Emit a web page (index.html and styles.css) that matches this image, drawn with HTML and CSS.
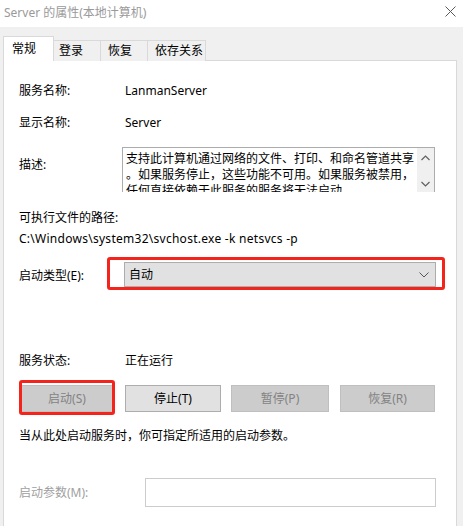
FILE: index.html
```html
<!DOCTYPE html>
<html lang="zh-CN">
<head>
<meta charset="utf-8">
<title>Server 的属性(本地计算机)</title>
<link rel="stylesheet" href="styles.css">
</head>
<body>
<div class="window">
  <div class="titlebar">
    <span class="title">Server 的属性(本地计算机)</span>
    <svg class="close" width="11" height="11" viewBox="0 0 11 11"><path d="M0.5 0.5 L10.5 10.5 M10.5 0.5 L0.5 10.5" stroke="#5a5a5a" stroke-width="1" fill="none"/></svg>
  </div>
  <div class="tabs">
    <div class="tab active t1">常规</div>
    <div class="tab t2">登录</div>
    <div class="tab t3">恢复</div>
    <div class="tab t4">依存关系</div>
  </div>
  <div class="panel">
    <div class="row r-name"><span class="label">服务名称:</span><span class="value">LanmanServer</span></div>
    <div class="row r-disp"><span class="label">显示名称:</span><span class="value">Server</span></div>
    <div class="row r-desc">
      <span class="label desc-label">描述:</span>
      <div class="descbox">
        <div class="desctext">支持此计算机通过网络的文件、打印、和命名管道共享。如果服务停止，这些功能不可用。如果服务被禁用，任何直接依赖于此服务的服务将无法启动。</div>
        <div class="scroll">
          <svg width="9" height="6" viewBox="0 0 9 6"><path d="M0.5 5 L4.5 1 L8.5 5" stroke="#606060" stroke-width="1.2" fill="none"/></svg>
          <svg width="9" height="6" viewBox="0 0 9 6"><path d="M0.5 1 L4.5 5 L8.5 1" stroke="#606060" stroke-width="1.2" fill="none"/></svg>
        </div>
      </div>
    </div>
    <div class="pathlabel">可执行文件的路径:</div>
    <div class="pathvalue">C:\Windows\system32\svchost.exe -k netsvcs -p</div>
    <div class="row r-type">
      <span class="label">启动类型(E):</span>
      <div class="combo">
        <span>自动</span>
        <svg width="10" height="6" viewBox="0 0 10 6"><path d="M0.5 0.5 L5 5 L9.5 0.5" stroke="#555" stroke-width="1" fill="none"/></svg>
        <div class="redframe combo-frame"></div>
      </div>
    </div>
    <div class="row r-status"><span class="label">服务状态:</span><span class="value">正在运行</span></div>
    <div class="buttons">
      <div class="btn disabled first">启动(S)<div class="redframe btn-frame"></div></div>
      <div class="btn">停止(T)</div>
      <div class="btn disabled">暂停(P)</div>
      <div class="btn disabled">恢复(R)</div>
    </div>
    <div class="hint">当从此处启动服务时，你可指定所适用的启动参数。</div>
    <div class="row r-param">
      <span class="label param-label">启动参数(M):</span>
      <div class="param-input"></div>
    </div>
  </div>
</div>
</body>
</html>
```

FILE: styles.css
```css
* { box-sizing: border-box; }
html, body {
  margin: 0;
  padding: 0;
  width: 463px;
  height: 526px;
  overflow: hidden;
  background: #f0f0f0;
  font-family: "Noto Sans", "Noto Sans CJK SC", sans-serif;
  font-size: 12px;
  color: #000;
}
.window { width: 463px; height: 526px; overflow: hidden; }
.titlebar {
  height: 27px;
  background: #fff;
  display: flex;
  align-items: center;
  justify-content: space-between;
  padding: 0 7px 2px 4px;
}
.title { color: #9a9a9a; font-size: 12px; line-height: 16px; }
.close { display: block; margin-top: -2px; }

.tabs {
  display: flex;
  align-items: flex-end;
  padding-left: 3px;
  margin-top: 9px;
  height: 25px;
  position: relative;
  z-index: 2;
}
.tab {
  height: 21px;
  line-height: 20px;
  border: 1px solid #d9d9d9;
  border-bottom: none;
  background: #f0f0f0;
  margin-left: -1px;
}
.tab.active {
  height: 25px;
  line-height: 24px;
  background: #fff;
  margin-left: 0;
  padding-bottom: 1px;
}
.t1 { width: 51px; padding-left: 8px; }
.t2 { width: 47px; padding-left: 5px; border-left: none; margin-left: 0; }
.t3 { width: 48px; padding-left: 7px; }
.t4 { width: 59px; padding-left: 7px; }

.panel {
  margin: -1px 6px 0 3px;
  height: 480px;
  background: #fff;
  border: 1px solid #d9d9d9;
  padding: 22px 0 0 15px;
  position: relative;
  z-index: 1;
}
.row { display: flex; align-items: flex-start; line-height: 16px; }
.label { width: 106px; flex: none; }
.r-disp { margin-top: 16px; }
.r-desc { margin-top: 16px; }
.desc-label { width: 103px; margin-top: 10px; }
.descbox {
  width: 313px;
  height: 45px;
  border: 1px solid #acacac;
  border-bottom: none;
  display: flex;
  overflow: hidden;
}
.desctext {
  flex: 1;
  padding: 3px 0 0 3px;
  line-height: 16px;
  height: 44px;
  overflow: hidden;
  line-break: anywhere;
}
.scroll {
  width: 17px;
  flex: none;
  background: #f0f0f0;
  display: flex;
  flex-direction: column;
  align-items: center;
  justify-content: space-between;
  padding: 7px 0 5px;
}
.scroll svg { display: block; }

.pathlabel { margin-top: 18px; line-height: 16px; }
.pathvalue { margin-top: 5px; line-height: 16px; letter-spacing: 0.27px; }

.r-type { margin-top: 15px; align-items: center; }
.r-type .label { width: 105px; margin-top: 2px; }
.combo {
  position: relative;
  width: 312px;
  height: 25px;
  background: #e1e1e1;
  border: 1px solid #adadad;
  display: flex;
  align-items: center;
  justify-content: space-between;
  padding: 0 6px 0 4px;
}
.redframe {
  position: absolute;
  border: 3px solid #f4241c;
  border-radius: 3px;
}
.combo-frame { left: -18px; right: -10px; top: -6px; bottom: -4px; }

.r-status { margin-top: 66px; }
.buttons {
  display: grid;
  grid-template-columns: 96px 96px 98px 96px;
  column-gap: 10px;
  margin-top: 16px;
  width: 417px;
}
.btn {
  position: relative;
  height: 27px;
  background: #e1e1e1;
  border: 1px solid #adadad;
  display: flex;
  align-items: center;
  justify-content: center;
  line-height: 16px;
}
.btn.disabled {
  background: #cccccc;
  border-color: #bfbfbf;
  color: #838383;
}
.btn-frame { left: -1px; right: -1px; top: -6px; bottom: -4px; }
.buttons .btn:nth-child(4) { margin-left: 1px; }

.hint { margin-top: 16px; line-height: 16px; }
.r-param { margin-top: 34px; align-items: center; }
.param-label { width: 126px; color: #a0a0a0; }
.param-input {
  width: 291px;
  height: 29px;
  border: 1px solid #cccccc;
  background: #fff;
}
```
